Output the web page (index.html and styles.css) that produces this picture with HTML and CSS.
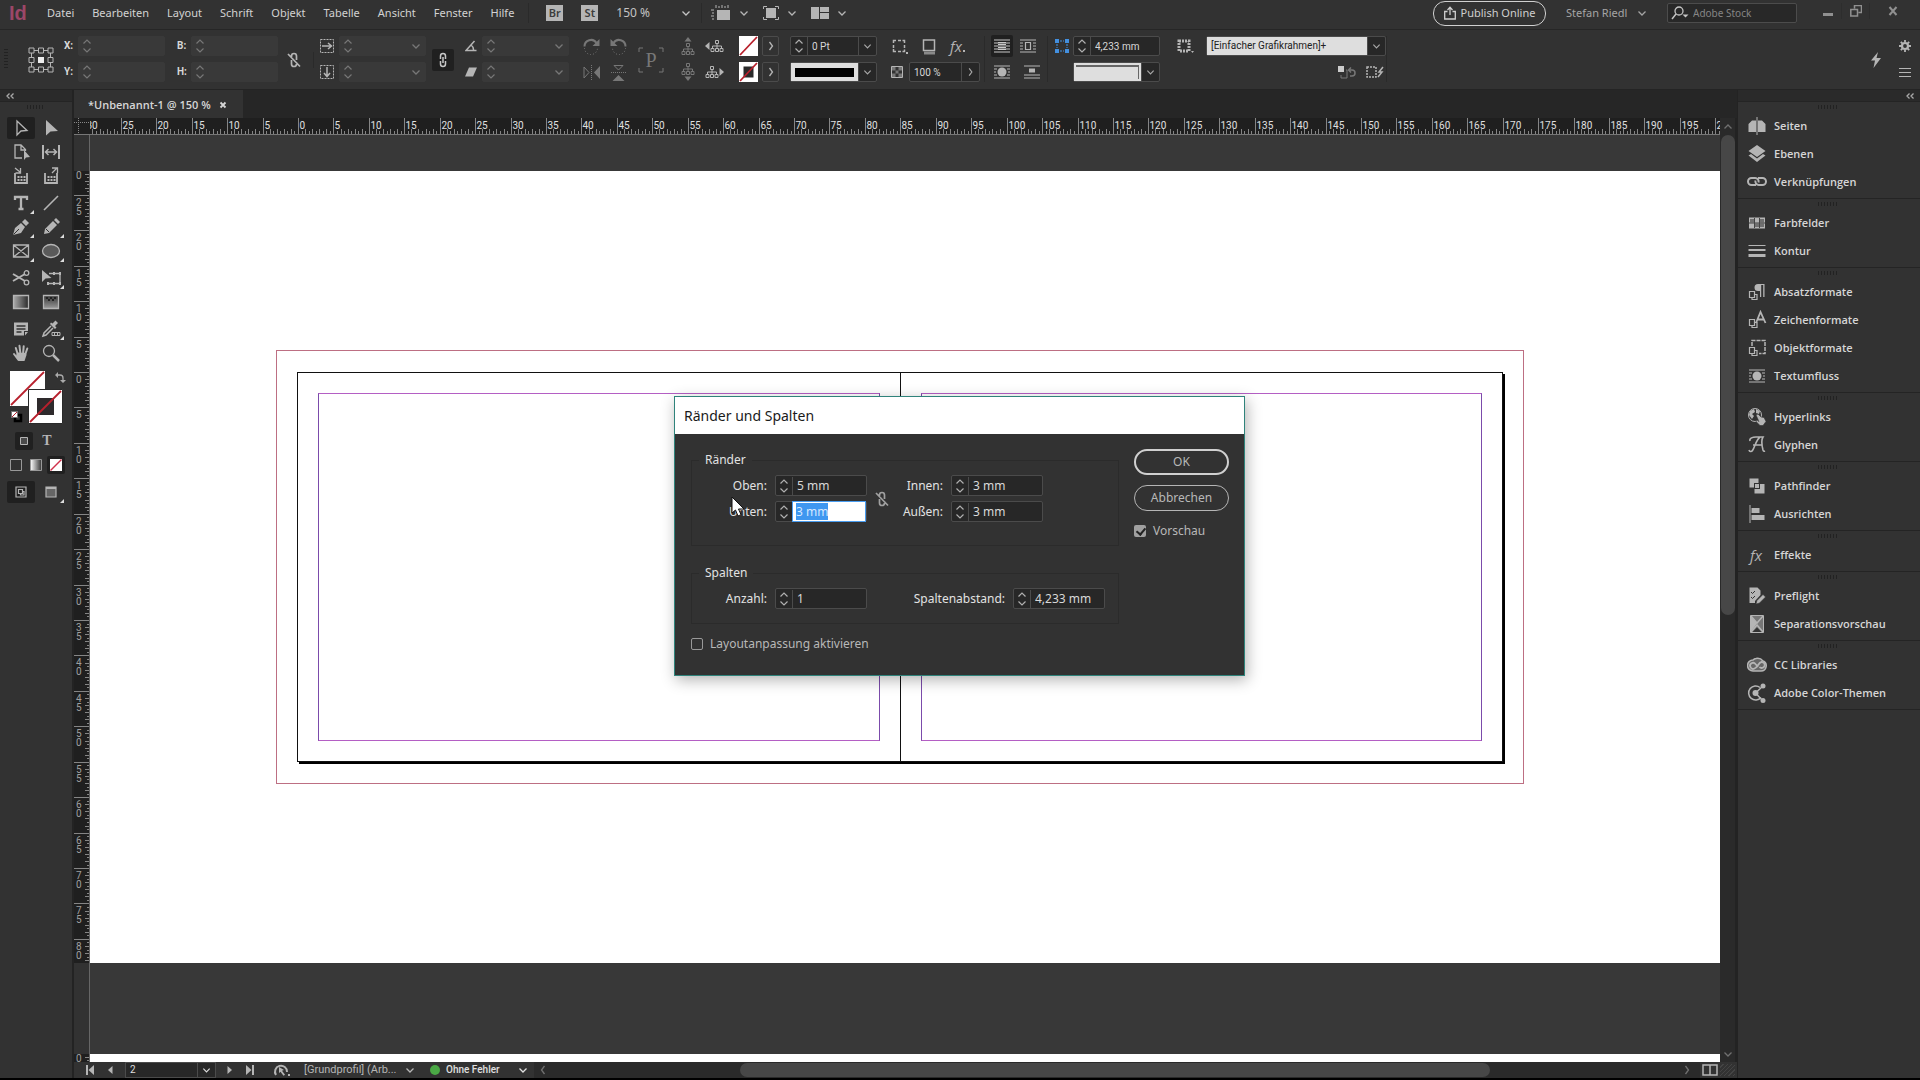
FILE: index.html
```html
<!DOCTYPE html>
<html lang="de">
<head>
    <meta charset="UTF-8">
    <meta name="viewport" content="width=device-width, initial-scale=1.0">
    <title>Unbenannt-1</title>
    <link rel="stylesheet" href="styles.css">
</head>
<body>

    <!-- Shared icons -->
    <svg class="sprite" aria-hidden="true">
        <symbol id="i-down" viewBox="0 0 10 10"><path d="M1.500 3.500 5 7l3.500-3.500" fill="none" stroke="currentColor" stroke-width="1.300"/></symbol>
        <symbol id="i-right" viewBox="0 0 10 10"><path d="M3.500 1 6.500 5l-3 4" fill="none" stroke="currentColor" stroke-width="1.300"/></symbol>
        <symbol id="i-steps" viewBox="0 0 10 18"><path d="M1.500 6.500 5 3l3.500 3.500M1.500 11.500 5 15l3.500-3.500" fill="none" stroke="currentColor" stroke-width="1.200"/></symbol>
        <symbol id="i-unlink" viewBox="0 0 14 16"><path d="M4.500 6V4a2.500 2.500 0 0 1 5 0v4M9.500 10v2a2.500 2.500 0 0 1-5 0V8M1 2l12 12.500" fill="none" stroke="currentColor" stroke-width="1.700"/></symbol>
        <symbol id="i-link" viewBox="0 0 10 16"><path d="M2.500 7V4a2.500 2.500 0 0 1 5 0v3M2.500 9v3a2.500 2.500 0 0 0 5 0V9M5 5v6" fill="none" stroke="currentColor" stroke-width="1.500"/></symbol>
        <symbol id="i-collapse" viewBox="0 0 10 8"><path d="M4.500 1.500 2 4l2.500 2.500M8.500 1.500 6 4l2.500 2.500" fill="none" stroke="currentColor" stroke-width="1.300"/></symbol>
        <symbol id="i-styles" viewBox="0 0 20 20"><path d="M2.500 9.500h5v6h-5zM5 15.500v2h5v-5H7.500" fill="none" stroke="currentColor" stroke-width="1.200"/></symbol>
        <symbol id="i-wrap" viewBox="0 0 18 14"><path d="M1 1h16M1 4h3M14 4h3M1 7h2M15 7h2M1 10h3M14 10h3M1 13h16" stroke="currentColor" stroke-width="1.200"/><circle cx="9" cy="7" r="4.500" fill="currentColor"/></symbol>
        <symbol id="i-tree" viewBox="0 0 14 12"><path d="M7 3v3M2.500 8.500V6h9v2.500M7 6v2.500M5.500.5h3v3h-3zM1 8.500h3v3H1zM5.500 8.500h3v3h-3zM10 8.500h3v3h-3z" fill="none" stroke="currentColor"/></symbol>
    </svg>

    <!-- Menu bar -->
    <header class="menubar">
        <span class="logo">Id</span>
        <nav class="menu">
            <a href="#">Datei</a>
            <a href="#">Bearbeiten</a>
            <a href="#">Layout</a>
            <a href="#">Schrift</a>
            <a href="#">Objekt</a>
            <a href="#">Tabelle</a>
            <a href="#">Ansicht</a>
            <a href="#">Fenster</a>
            <a href="#">Hilfe</a>
        </nav>
        <div class="quick">
            <button class="app-badge">Br</button>
            <button class="app-badge">St</button>
            <label class="picker zoom"><select aria-label="Zoomstufe"><option>150 %</option></select><svg class="chev"><use href="#i-down"/></svg></label>
        </div>
        <div class="view-modes">
            <button aria-label="Anzeigeoptionen"><svg width="20" height="16" viewBox="0 0 20 16"><path d="M6 5h13v10H6z" fill="currentColor"/><path d="M5 3V0M8 3V1M11 3V0M14 3V1M17 3V0M3 5H0M3 8H1M3 11H0M3 14H1" stroke="currentColor"/></svg><svg class="chev"><use href="#i-down"/></svg></button>
            <button aria-label="Bildschirmmodus"><svg width="16" height="16" viewBox="0 0 16 16"><path d="M3 3h10v10H3z" fill="currentColor"/><path d="M.5 4V1.500H4M12 1.500h3.500V4M15.500 12v2.500H12M4 14.500H.5V12" fill="none" stroke="currentColor"/></svg><svg class="chev"><use href="#i-down"/></svg></button>
            <button aria-label="Dokumente anordnen"><svg width="18" height="12" viewBox="0 0 18 12"><path d="M0 0h8v12H0zM9 0h9v5H9zM9 6h9v6H9z" fill="currentColor"/></svg><svg class="chev"><use href="#i-down"/></svg></button>
        </div>
        <div class="account">
            <button class="publish"><svg width="12" height="14" viewBox="0 0 12 14"><path d="M3.500 5.500H.7v7.500h10.600V5.500H8.500M6 9V1.500M3.500 4 6 1.300 8.500 4" fill="none" stroke="currentColor" stroke-width="1.300"/></svg>Publish Online</button>
            <label class="picker user"><select aria-label="Benutzer"><option>Stefan Riedl</option></select><svg class="chev"><use href="#i-down"/></svg></label>
            <label class="search"><svg width="18" height="14" viewBox="0 0 18 14"><circle cx="8" cy="5" r="4" fill="none" stroke="currentColor" stroke-width="1.300"/><path d="M5 8 1 13" stroke="currentColor" stroke-width="1.500"/><path d="M11.500 8.500h6l-3 3z" fill="currentColor"/></svg><input type="text" placeholder="Adobe Stock" aria-label="Adobe Stock"></label>
            <div class="window-buttons">
                <button aria-label="Minimieren"><svg width="12" height="12" viewBox="0 0 12 12"><path d="M1 8h10v3H1z" fill="currentColor"/></svg></button>
                <button aria-label="Verkleinern"><svg width="12" height="12" viewBox="0 0 12 12"><path d="M4.500 3.500v-3h7v7h-3M.8 4.500h6.700v6.500H.8z" fill="none" stroke="currentColor" stroke-width="1.500"/></svg></button>
                <button class="wide" aria-label="Schließen"><svg width="12" height="12" viewBox="0 0 12 12"><path d="M2.500 2l7 8M9.500 2l-7 8" stroke="currentColor" stroke-width="2"/></svg></button>
            </div>
        </div>
    </header>

    <!-- Control bar -->
    <section class="controlbar" aria-label="Steuerung">
        <span class="grip-v"></span>
        <svg class="middle" width="26" height="26" viewBox="0 0 26 26"><path d="M1 1h5v5H1zM10.500 1h5v5h-5zM20 1h5v5h-5zM1 10.500h5v5H1zM20 10.500h5v5h-5zM1 20h5v5H1zM10.500 20h5v5h-5zM20 20h5v5h-5zM6 3.500h4.500M15.500 3.500H20M6 22.500h4.500M15.500 22.500H20M3.500 6v4.500M3.500 15.500V20M22.500 6v4.500M22.500 15.500V20" fill="none" stroke="currentColor"/><path d="M10 10h6v6h-6z" fill="#eee"/></svg>
        <div class="pair">
            <div class="row"><label class="tag" for="pos-x">X:</label><div class="field off"><svg class="steps"><use href="#i-steps"/></svg><input id="pos-x" type="text"></div></div>
            <div class="row"><label class="tag" for="pos-y">Y:</label><div class="field off"><svg class="steps"><use href="#i-steps"/></svg><input id="pos-y" type="text"></div></div>
        </div>
        <div class="pair">
            <div class="row"><label class="tag" for="size-w">B:</label><div class="field off"><svg class="steps"><use href="#i-steps"/></svg><input id="size-w" type="text"></div></div>
            <div class="row"><label class="tag" for="size-h">H:</label><div class="field off"><svg class="steps"><use href="#i-steps"/></svg><input id="size-h" type="text"></div></div>
        </div>
        <div class="middle divided"><svg width="16" height="16"><use href="#i-unlink"/></svg></div>
        <div class="pair">
            <div class="row"><svg width="14" height="14" viewBox="0 0 14 14"><path d="M.5.5h13v13H.5z" fill="none" stroke="currentColor" stroke-dasharray="2 1"/><path d="M2 7h9M8 4l3.500 3L8 10" fill="none" stroke="currentColor" stroke-width="1.500"/></svg><div class="field off"><svg class="steps"><use href="#i-steps"/></svg><input type="text" aria-label="X-Skalierung"><svg class="chev"><use href="#i-down"/></svg></div></div>
            <div class="row"><svg width="14" height="14" viewBox="0 0 14 14"><path d="M.5.5h13v13H.5z" fill="none" stroke="currentColor" stroke-dasharray="2 1"/><path d="M7 2v9M4 8l3 3.500L10 8" fill="none" stroke="currentColor" stroke-width="1.500"/></svg><div class="field off"><svg class="steps"><use href="#i-steps"/></svg><input type="text" aria-label="Y-Skalierung"><svg class="chev"><use href="#i-down"/></svg></div></div>
        </div>
        <button class="pressed middle" aria-label="Proportionen"><svg width="10" height="16"><use href="#i-link"/></svg></button>
        <div class="pair">
            <div class="row"><svg width="12" height="12" viewBox="0 0 12 12"><path d="M9.500 1 1 10.500h10.500M6 5a6 6 0 0 1 2.500 5.500" fill="none" stroke="currentColor" stroke-width="1.500"/></svg><div class="field off"><svg class="steps"><use href="#i-steps"/></svg><input type="text" aria-label="Drehwinkel"><svg class="chev"><use href="#i-down"/></svg></div></div>
            <div class="row"><svg width="12" height="12" viewBox="0 0 12 12"><path d="M4 1.500h8L8 10.500H0z" fill="currentColor"/></svg><div class="field off"><svg class="steps"><use href="#i-steps"/></svg><input type="text" aria-label="Scherwinkel"><svg class="chev"><use href="#i-down"/></svg></div></div>
        </div>
        <div class="pair dim">
            <div class="row wide-gap">
                <svg width="17" height="17" viewBox="0 0 17 17"><path d="M1.500 8.500a6.500 6.500 0 0 1 12-3.500" fill="none" stroke="currentColor" stroke-width="2"/><path d="M16.500 1v7h-7z" fill="currentColor"/><path d="M1.500 10a6.500 6.500 0 0 0 13 0" fill="none" stroke="currentColor" stroke-dasharray="1 2"/></svg>
                <svg width="17" height="17" viewBox="0 0 17 17"><path d="M15.500 8.500a6.500 6.500 0 0 0-12-3.500" fill="none" stroke="currentColor" stroke-width="2"/><path d="M.5 1v7h7z" fill="currentColor"/><path d="M15.500 10a6.500 6.500 0 0 1-13 0" fill="none" stroke="currentColor" stroke-dasharray="1 2"/></svg>
            </div>
            <div class="row wide-gap">
                <svg width="17" height="17" viewBox="0 0 17 17"><path d="M1 3v11l5-5.500z" fill="none" stroke="currentColor"/><path d="M8.500 1v15" stroke="currentColor" stroke-dasharray="1 1"/><path d="M17 2v13l-6-6.500z" fill="currentColor"/></svg>
                <svg width="17" height="17" viewBox="0 0 17 17"><path d="M4 1.500h9L8.500 6z" fill="none" stroke="currentColor"/><path d="M1 8.500h15" stroke="currentColor" stroke-dasharray="1 1"/><path d="M2.500 17h12l-6-6z" fill="currentColor"/></svg>
            </div>
        </div>
        <svg class="middle dim" width="26" height="26" viewBox="0 0 26 26"><path d="M1 5V1h4M21 1h4v4M25 21v4h-4M5 25H1v-4" fill="none" stroke="currentColor"/><text x="13" y="20" text-anchor="middle" class="p-text" fill="currentColor">P</text></svg>
        <div class="pair">
            <div class="row wide-gap">
                <svg class="dim" width="14" height="18" viewBox="0 0 14 18"><path d="M3.500 4.500 7 0l3.500 4.500z" fill="currentColor"/><use href="#i-tree" y="6" width="14" height="12"/></svg>
                <svg width="19" height="12" viewBox="0 0 19 12"><path d="M4.500 2v8L0 6z" fill="currentColor"/><use href="#i-tree" x="5" width="14" height="12"/></svg>
            </div>
            <div class="row wide-gap">
                <svg class="dim" width="14" height="18" viewBox="0 0 14 18"><use href="#i-tree" width="14" height="12"/><path d="M3.500 13.500 7 18l3.500-4.500z" fill="currentColor"/></svg>
                <svg width="19" height="12" viewBox="0 0 19 12"><use href="#i-tree" width="14" height="12"/><path d="M14.500 2v8L19 6z" fill="currentColor"/></svg>
            </div>
        </div>
        <div class="pair">
            <div class="row tight"><svg width="19" height="20" viewBox="0 0 19 20"><path d="M0 0h19v20H0z" fill="#fff"/><path d="M1 19 18 1" stroke="#b8202c" stroke-width="1.800"/></svg><button class="boxed" aria-label="Flächenfarbe"><svg class="chev"><use href="#i-right"/></svg></button></div>
            <div class="row tight"><svg width="19" height="20" viewBox="0 0 19 20"><path d="M0 0h19v20H0z" fill="#fff"/><path d="M4.500 4.500h10v11h-10z" fill="#2a2a2a"/><path d="M1 19 18 1" stroke="#b8202c" stroke-width="1.800"/></svg><button class="boxed" aria-label="Konturfarbe"><svg class="chev"><use href="#i-right"/></svg></button></div>
        </div>
        <div class="pair">
            <div class="field"><svg class="steps"><use href="#i-steps"/></svg><input type="text" value="0 Pt" aria-label="Konturstärke"><svg class="chev cap"><use href="#i-down"/></svg></div>
            <button class="field preview" aria-label="Konturart"><span class="stroke-line"></span><svg class="chev cap"><use href="#i-down"/></svg></button>
        </div>
        <div class="pair divided">
            <div class="row effects">
                <svg width="17" height="17" viewBox="0 0 17 17"><path d="M2.500 5V2.500H5M7 2.500h3M11.500 2.500h2V5M13.500 7v3M13.500 11.500v2h-2M10 13.500H7M5 13.500H2.500V11M2.500 10V7" fill="none" stroke="currentColor" stroke-width="1.500"/><path d="M15 14h2v2h-2z" fill="currentColor"/></svg>
                <svg width="16" height="17" viewBox="0 0 16 17"><path d="M2.500 2h11v10.500h-11z" fill="none" stroke="currentColor" stroke-width="1.500"/><path d="M3 15h11" stroke="#8a8a8a" stroke-width="3"/></svg>
                <span class="fx">fx<i></i></span>
            </div>
            <div class="row">
                <svg width="12" height="12" viewBox="0 0 12 12"><path d="M.5.5h11v11H.5z" fill="none" stroke="currentColor"/><path d="M1 1h3.500v3.500H1zM7.500 1H11v3.500H7.500zM4.500 4.500h3v3h-3zM1 7.500h3.500V11H1zM7.500 7.500H11V11H7.500z" fill="#777"/></svg>
                <div class="field opacity"><input type="text" value="100 %" aria-label="Deckkraft"><svg class="chev cap"><use href="#i-right"/></svg></div>
            </div>
        </div>
        <div class="pair divided">
            <div class="row tight">
                <button class="pressed" aria-label="Kein Textumfluss"><svg width="18" height="14" viewBox="0 0 18 14"><path d="M1 1h16M1 4h16M1 7h16M1 10h16M1 13h16" stroke="currentColor" stroke-width="1.200"/><path d="M5 3.500h8M5 5.500h8M5 8.500h8M5 10.500h8" stroke="currentColor"/></svg></button>
                <button class="plain" aria-label="Umfließen der Bounding Box"><svg width="18" height="14" viewBox="0 0 18 14"><path d="M1 1h16M1 4h3M14 4h3M1 7h3M14 7h3M1 10h3M14 10h3M1 13h16M6.500 3.500h5v7h-5z" fill="none" stroke="currentColor" stroke-width="1.200"/></svg></button>
            </div>
            <div class="row tight">
                <button class="plain" aria-label="Konturenführung"><svg width="18" height="14"><use href="#i-wrap"/></svg></button>
                <button class="plain" aria-label="Objekt überspringen"><svg width="18" height="14" viewBox="0 0 18 14"><path d="M1 1h16M1 10h16M1 13h16" stroke="currentColor" stroke-width="1.200"/><path d="M6 3.500h6v4H6z" fill="currentColor"/></svg></button>
            </div>
        </div>
        <div class="pair corner">
            <div class="row"><svg width="16" height="16" viewBox="0 0 16 16"><path d="M1 1h4v4H1zM11 1h4v4h-4zM1 11h4v4H1zM11 11h4v4h-4z" fill="#4390e0"/><path d="M6 3h4M6 13h4M3 6v4M13 6v4" stroke="#4390e0" stroke-dasharray="2 1"/></svg><div class="field"><svg class="steps"><use href="#i-steps"/></svg><input type="text" value="4,233 mm" aria-label="Eckengröße"></div></div>
            <button class="field preview" aria-label="Eckenform"><span class="corner-line"></span><svg class="chev cap"><use href="#i-down"/></svg></button>
        </div>
        <div class="pair divided">
            <div class="row object-style"><svg width="18" height="16" viewBox="0 0 18 16"><path d="M3 3h10v10H3z" fill="none" stroke="currentColor" stroke-width="3" stroke-dasharray="2 1"/><path d="M15 13h3l-1.500 2z" fill="currentColor"/></svg><label class="field"><select aria-label="Objektformat"><option>[Einfacher Grafikrahmen]+</option></select><svg class="chev cap"><use href="#i-down"/></svg></label></div>
            <div class="row at-end">
                <svg width="20" height="14" viewBox="0 0 20 14"><path d="M1 1h6v6H1z" fill="#ccc"/><path d="M4 10v3h6V5H9" fill="none" stroke="#777"/><path d="M12 5h3a3 3 0 0 1 0 6h-2M14 2.500 11.500 5 14 7.500" fill="none" stroke="#777" stroke-width="1.500"/></svg>
                <svg width="18" height="14" viewBox="0 0 18 14"><path d="M1 2h9v10H1z" fill="none" stroke="currentColor" stroke-width="1.500" stroke-dasharray="2 1"/><path d="M17 2l-4 5h3l-4 5" fill="none" stroke="currentColor" stroke-width="1.500"/></svg>
            </div>
        </div>
        <span></span>
        <button class="plain middle" aria-label="Schnellanwendung"><svg width="12" height="18" viewBox="0 0 12 18"><path d="M8 1 1 9.500h4L3.500 17 11 7H6.500z" fill="currentColor"/></svg></button>
        <div class="pair">
            <button class="plain" aria-label="Anpassen"><svg width="12" height="12" viewBox="0 0 12 12"><circle cx="6" cy="6" r="3" fill="none" stroke="currentColor" stroke-width="2.200"/><path d="M6 0v2M6 10v2M0 6h2M10 6h2M1.800 1.800l1.500 1.500M8.700 8.700l1.500 1.500M1.800 10.200l1.500-1.500M8.700 3.300l1.500-1.500" stroke="currentColor" stroke-width="1.800"/></svg></button>
            <button class="plain" aria-label="Bedienfeldmenü"><svg width="12" height="10" viewBox="0 0 12 10"><path d="M0 1.500h12M0 5.500h12M0 9.500h12" stroke="currentColor"/></svg></button>
        </div>
    </section>

    <main class="workspace">

        <!-- Tools -->
        <aside class="tools" aria-label="Werkzeuge">
            <div class="panel-head"><svg width="10" height="8"><use href="#i-collapse"/></svg></div>
            <div class="grip"></div>
            <div class="tool-group">
                <button class="tool active" aria-label="Auswahl"><svg viewBox="0 0 20 20"><path d="M6 3v14l4-4 6-.5z" fill="none" stroke="currentColor" stroke-width="1.300"/></svg></button>
                <button class="tool" aria-label="Direktauswahl"><svg viewBox="0 0 20 20"><path d="M5 2v15.500l4.500-4L17 13z" fill="currentColor"/></svg></button>
                <button class="tool" aria-label="Seite"><svg viewBox="0 0 20 20"><path d="M11 16H4V3h6l4.500 4.500V9M10 3v5h4" fill="none" stroke="currentColor" stroke-width="1.300"/><path d="M13 8v10l2-2.500 4-.5z" fill="currentColor"/></svg></button>
                <button class="tool" aria-label="Lücke"><svg viewBox="0 0 20 20"><path d="M2 3v14M18 3v14" stroke="currentColor" stroke-width="2"/><path d="M5 10h10M7.500 7 4.500 10l3 3M12.500 7l3 3-3 3" fill="none" stroke="currentColor" stroke-width="1.500"/></svg></button>
                <button class="tool" aria-label="Inhaltsaufnahme"><svg viewBox="0 0 20 20"><path d="M4 7v10h12V7" fill="none" stroke="currentColor" stroke-width="1.800"/><path d="M6.500 11h2M9.500 11h2M12.500 11h2M6.500 14h2M9.500 14h2M12.500 14h2" stroke="currentColor" stroke-width="2"/><path d="M4 2l5 4M9.500 2v5h-5" fill="none" stroke="currentColor" stroke-width="1.300"/></svg></button>
                <button class="tool" aria-label="Inhaltsplatzierung"><svg viewBox="0 0 20 20"><path d="M4 7v10h12V7" fill="none" stroke="currentColor" stroke-width="1.800"/><path d="M6.500 11h2M9.500 11h2M12.500 11h2M6.500 14h2M9.500 14h2M12.500 14h2" stroke="currentColor" stroke-width="2"/><path d="M11 7l5-5M11 2h5.500v5" fill="none" stroke="currentColor" stroke-width="1.300"/></svg></button>
            </div>
            <div class="tool-group">
                <button class="tool more" aria-label="Text"><svg viewBox="0 0 20 20"><path d="M4 7V4h12v3M10 4v12M7.500 16h5" fill="none" stroke="currentColor" stroke-width="2.300"/></svg></button>
                <button class="tool" aria-label="Linienzeichner"><svg viewBox="0 0 20 20"><path d="M3 17 17 3" stroke="currentColor" stroke-width="1.600"/></svg></button>
                <button class="tool more" aria-label="Zeichenstift"><svg viewBox="0 0 20 20"><path d="M2 18 4 11l6-5 4 4-4 6z" fill="currentColor"/><path d="M11 5l3-3 4 4-3 3z" fill="currentColor"/><path d="M2.500 17.500 8 12" stroke="#323232"/></svg></button>
                <button class="tool more" aria-label="Buntstift"><svg viewBox="0 0 20 20"><path d="M3 17l1-5 8-8 4 4-8 8zM13 3l2-2 4 4-2 2z" fill="currentColor"/><path d="M5 12l3 3" stroke="#323232"/></svg></button>
                <button class="tool more" aria-label="Rechteckrahmen"><svg viewBox="0 0 20 20"><path d="M2.500 4h15v12h-15zM2.500 4l15 12M17.500 4l-15 12" fill="none" stroke="currentColor" stroke-width="1.300"/></svg></button>
                <button class="tool more" aria-label="Ellipse"><svg viewBox="0 0 20 20"><ellipse cx="10" cy="10" rx="8.500" ry="6.500" fill="#5a5a5a" stroke="currentColor" stroke-width="1.300"/></svg></button>
            </div>
            <div class="tool-group">
                <button class="tool" aria-label="Schere"><svg viewBox="0 0 20 20"><path d="M2 6l12 7M2 13l12-7" stroke="currentColor" stroke-width="2"/><circle cx="15.500" cy="5" r="2.300" fill="none" stroke="currentColor" stroke-width="1.300"/><circle cx="15.500" cy="14.500" r="2.300" fill="none" stroke="currentColor" stroke-width="1.300"/></svg></button>
                <button class="tool more" aria-label="Frei transformieren"><svg viewBox="0 0 20 20"><path d="M8 5.500h11v10H7" fill="none" stroke="currentColor" stroke-width="1.300" /><path d="M18 4h2v3h-2zM18 14h2v3h-2zM12 4h2v3h-2zM12 14h2v3h-2zM6 14h2v3H6z" fill="currentColor"/><path d="M1 2v12l3.500-3.500 6-.5z" fill="currentColor"/></svg></button>
                <button class="tool" aria-label="Verlaufsfarbfeld"><svg viewBox="0 0 20 20"><defs><linearGradient id="grad-h"><stop offset="0" stop-color="#aaa"/><stop offset="1" stop-color="#2a2a2a"/></linearGradient></defs><path d="M2.500 3.500h15v13h-15z" fill="url(#grad-h)" stroke="currentColor" stroke-width="1.300"/></svg></button>
                <button class="tool" aria-label="Weiche Verlaufskante"><svg viewBox="0 0 20 20"><defs><linearGradient id="grad-v" x2="0" y2="1"><stop offset="0" stop-color="#333"/><stop offset="1" stop-color="#999"/></linearGradient></defs><path d="M2.500 3.500h15v13h-15z" fill="url(#grad-v)" stroke="currentColor" stroke-width="1.300"/><path d="M5 5h2v2H5zM9 5h2v2H9zM13 5h2v2h-2zM7 7h2v2H7zM11 7h2v2h-2z" fill="#222"/></svg></button>
            </div>
            <div class="tool-group">
                <button class="tool" aria-label="Notiz"><svg viewBox="0 0 20 20"><path d="M3 3.500h14V12h-4v4.500H3zM14 13h3l-3 3.500z" fill="currentColor"/><path d="M5.500 7h9M5.500 10h9M5.500 13h5" stroke="#323232" stroke-width="1.300"/></svg></button>
                <button class="tool more" aria-label="Pipette"><svg viewBox="0 0 20 20"><path d="M10 7 3 14l-1 3 3-1 7-7" fill="none" stroke="currentColor" stroke-width="1.500"/><path d="M9 5l5 5 1.500-1.500L14 7l3-3-2.500-2.500-3 3L10 3.500z" fill="currentColor"/><path d="M11 13.500h8v3h-8zM13.500 13v3M16.500 13v3" fill="none" stroke="currentColor"/></svg></button>
                <button class="tool" aria-label="Hand"><svg viewBox="0 0 20 20"><path d="M7.500 17 3 11M7 12 4.800 5M9.500 11.500 8.500 2.800M12 11.500l.7-8.200M14 12l2.300-6.500" fill="none" stroke="currentColor" stroke-width="2" stroke-linecap="round"/><path d="M6 9.500l9 .5.500 2-2 6H8l-3-5z" fill="currentColor"/></svg></button>
                <button class="tool" aria-label="Zoom"><svg viewBox="0 0 20 20"><circle cx="8" cy="8" r="5.500" fill="none" stroke="currentColor" stroke-width="1.300"/><path d="M12 12l6 6" stroke="currentColor" stroke-width="2.500"/></svg></button>
            </div>
            <svg class="color-proxy" width="60" height="56" viewBox="0 0 60 56" aria-label="Fläche und Kontur">
                <path d="M4 2h35v35H4z" fill="#fff"/><path d="M5 36 38 3" stroke="#b8202c" stroke-width="1.800"/>
                <path d="M22.500 20.500h34v34h-34z" fill="#fff" stroke="#2a2a2a"/><path d="M31 29h17v17H31z" fill="#2e2a2c"/><path d="M24 53 55 22" stroke="#b8202c" stroke-width="1.800"/>
                <path d="M51 6h3a3 3 0 0 1 3 3v4" fill="none" stroke="#aaa" stroke-width="1.300"/><path d="M49 6l3-3v6zM54 11h6l-3 3z" fill="#aaa"/>
                <path d="M9 46h6v6H9z" fill="none" stroke="#000" stroke-width="2.500"/><path d="M5.500 42.500h6v6h-6z" fill="#fff" stroke="#777"/><path d="M6 48l5-5" stroke="#b8202c"/>
            </svg>
            <div class="formatting">
                <button class="mini active" aria-label="Formatierung wirkt sich auf Container aus"><svg viewBox="0 0 16 16"><path d="M4.500 4.500h7v7h-7z" fill="#4a4a4a" stroke="currentColor"/></svg></button>
                <button class="mini serif">T</button>
            </div>
            <div class="apply">
                <button class="mini" aria-label="Farbe anwenden"><svg viewBox="0 0 16 16"><path d="M2.500 2.500h11v11h-11z" fill="none" stroke="#999"/></svg></button>
                <button class="mini" aria-label="Verlauf anwenden"><svg viewBox="0 0 16 16"><defs><linearGradient id="grad-w"><stop offset="0" stop-color="#fff"/><stop offset="1" stop-color="#333"/></linearGradient></defs><path d="M2.500 2.500h11v11h-11z" fill="url(#grad-w)" stroke="#999"/></svg></button>
                <button class="mini active" aria-label="Keine anwenden"><svg viewBox="0 0 16 16"><path d="M2 2h12v12H2z" fill="#fff"/><path d="M2.500 13.500l11-11" stroke="#d0304a" stroke-width="1.500"/></svg></button>
            </div>
            <div class="tool-group">
                <button class="tool active" aria-label="Normal"><svg viewBox="0 0 20 20"><path d="M5 5h10v10H5zM7.500 7.500h4v4h-4zM9.500 11.500v1.500h3.500V9.500h-1.500" fill="none" stroke="currentColor" stroke-width="1.200"/></svg></button>
                <button class="tool more" aria-label="Vorschau"><svg viewBox="0 0 20 20"><path d="M5 5h10v10H5z" fill="#666" stroke="currentColor" stroke-width="1.200"/><path d="M5 6h10" stroke="currentColor" stroke-width="2"/></svg></button>
            </div>
        </aside>

        <!-- Document window -->
        <section class="document">
            <div class="tabs">
                <div class="tab"><a href="#">*Unbenannt-1 @ 150 %</a><button aria-label="Tab schließen"><svg width="8" height="8" viewBox="0 0 8 8"><path d="M1.500 1.500l5 5M6.500 1.500l-5 5" stroke="currentColor" stroke-width="1.800"/></svg></button></div>
            </div>
            <div class="view">
                <svg class="ruler-corner" viewBox="0 0 16 16"><path d="M0 4.500h16M4.500 0v16" stroke="#888" stroke-dasharray="1 1"/></svg>
                <svg class="ruler-h" id="ruler-h"></svg>
                <div class="scroll-up"><svg class="chev flip"><use href="#i-down"/></svg></div>
                <div class="ruler-v">
                    <svg class="ruler-strip" id="ruler-v"></svg>
                    <svg class="ruler-strip next" id="ruler-v-next"></svg>
                </div>
                <div class="canvas">
                    <div class="pasteboard"></div>
                    <div class="pasteboard following"></div>
                    <div class="bleed"></div>
                    <div class="spread">
                        <div class="page"><div class="margins"></div></div>
                        <div class="page"><div class="margins"></div></div>
                    </div>
                </div>
                <div class="scroll-v"><span class="thumb"></span><svg class="chev"><use href="#i-down"/></svg></div>
            </div>
            <footer class="statusbar">
                <button aria-label="Erste Seite"><svg width="10" height="10" viewBox="0 0 10 10"><path d="M1 0h2v10H1zM9 0v10L3.500 5z" fill="currentColor"/></svg></button>
                <button aria-label="Vorherige Seite"><svg width="10" height="10" viewBox="0 0 10 10"><path d="M7.500 1v8L3 5z" fill="currentColor"/></svg></button>
                <div class="page-number"><input type="text" value="2" aria-label="Seite"><svg class="chev cap"><use href="#i-down"/></svg></div>
                <button aria-label="Nächste Seite"><svg width="10" height="10" viewBox="0 0 10 10"><path d="M2.500 1v8L7 5z" fill="currentColor"/></svg></button>
                <button aria-label="Letzte Seite"><svg width="10" height="10" viewBox="0 0 10 10"><path d="M7 0h2v10H7zM1 0v10l5.500-5z" fill="currentColor"/></svg></button>
                <svg class="open-doc" width="18" height="14" viewBox="0 0 18 14"><path d="M3 12a6 6 0 1 1 11-3" fill="none" stroke="currentColor" stroke-width="2"/><path d="M6 4l5 3-2 .8 3 4-1.500 1-3-4L6 10z" fill="currentColor"/><path d="M15 11h2v2h-2z" fill="currentColor"/></svg>
                <label class="picker profile"><select aria-label="Preflight-Profil"><option>[Grundprofil] (Arb...</option></select><svg class="chev"><use href="#i-down"/></svg></label>
                <label class="picker errors"><span class="dot"></span><select aria-label="Preflight-Status"><option>Ohne Fehler</option></select><svg class="chev"><use href="#i-down"/></svg></label>
                <div class="scroll-h"><svg class="chev left"><use href="#i-right"/></svg><span class="thumb"></span><svg class="chev"><use href="#i-right"/></svg></div>
                <button aria-label="Layoutansicht teilen"><svg width="16" height="12" viewBox="0 0 16 12"><path d="M1 1h14v10H1zM8 1v10" fill="none" stroke="currentColor" stroke-width="1.500"/></svg></button>
                <span class="resize"></span>
            </footer>
        </section>

        <!-- Panel dock -->
        <aside class="dock" aria-label="Bedienfelder">
            <div class="panel-head end"><svg width="10" height="8"><use href="#i-collapse"/></svg></div>
            <div class="panel-group">
                <a href="#"><svg viewBox="0 0 20 20"><path d="M1.500 8 5 4.500h4V16H1.500zM11 4.500h4L18.500 8v8H11z" fill="currentColor"/><path d="M10 1v18" stroke="currentColor"/></svg>Seiten</a>
                <a href="#"><svg viewBox="0 0 20 20"><path d="M10 1l8.500 6L10 13 1.500 7zM1.500 11.500 4 10l6 4.500L16 10l2.500 1.500L10 18z" fill="currentColor"/></svg>Ebenen</a>
                <a href="#"><svg viewBox="0 0 20 20"><path d="M9 13H4.500a3.500 3.500 0 0 1 0-7H8a3.500 3.500 0 0 1 3.500 4.500M11 6h4.500a3.500 3.500 0 0 1 0 7H12a3.500 3.500 0 0 1-3.500-4.500" fill="none" stroke="currentColor" stroke-width="2"/></svg>Verknüpfungen</a>
            </div>
            <div class="panel-group">
                <a href="#"><svg viewBox="0 0 20 20"><path d="M2 4.500h16v11H2z" fill="currentColor"/><path d="M3 6h4v3.500H3zM13 6h4v3.500h-4zM8 10.500h4V14H8zM13 10.500h4V14h-4z" fill="#707070"/><path d="M2 10h16M7.500 5v10M12.500 5v10" stroke="#444"/></svg>Farbfelder</a>
                <a href="#"><svg viewBox="0 0 20 20"><path d="M1.500 4.500h17" stroke="currentColor"/><path d="M1.500 9h17" stroke="currentColor" stroke-width="2"/><path d="M1.500 14.500h17" stroke="currentColor" stroke-width="3"/></svg>Kontur</a>
            </div>
            <div class="panel-group">
                <a href="#"><svg viewBox="0 0 20 20"><use href="#i-styles" width="20" height="20"/><path d="M17.500 15V2H11a3.500 3.500 0 0 0 0 7h2V15h1.200V3h2V15z" fill="currentColor"/></svg>Absatzformate</a>
                <a href="#"><svg viewBox="0 0 20 20"><use href="#i-styles" width="20" height="20"/><path d="M9 13l4.500-11L18.500 13M10.500 9.500h6.500" fill="none" stroke="currentColor" stroke-width="1.800"/></svg>Zeichenformate</a>
                <a href="#"><svg viewBox="0 0 20 20"><use href="#i-styles" width="20" height="20"/><path d="M5 8V2.500h13v13h-6" fill="none" stroke="currentColor" stroke-width="1.500" stroke-dasharray="4 1"/></svg>Objektformate</a>
                <a href="#"><svg viewBox="0 0 20 20"><use href="#i-wrap" x="1" y="3" width="18" height="14"/></svg>Textumfluss</a>
            </div>
            <div class="panel-group">
                <a href="#"><svg viewBox="0 0 20 20"><circle cx="8" cy="8" r="6.500" fill="none" stroke="currentColor"/><path d="M3 4l4-2 1 3-3 2 2 2-2 3-3-4zM9 2l4 2-1 3-3-1z" fill="currentColor"/><path d="M9 8l2-1 3 3 3 .5 2 4-3 4h-3l-4-4 1.500-1 1.500 1z" fill="currentColor" stroke="#323232" stroke-width=".6"/></svg>Hyperlinks</a>
                <a href="#"><svg viewBox="0 0 20 20"><path d="M3 6c-1-3 3-4 6-4h7c-2 3-1 9 0 13 .3 1 1 1.500 2 1M13 2C9 5 8 12 5.500 15.500 4.500 17 2.500 17 2 15M6 10h9" fill="none" stroke="currentColor" stroke-width="1.600"/></svg>Glyphen</a>
            </div>
            <div class="panel-group">
                <a href="#"><svg viewBox="0 0 20 20"><path d="M2.500 2.500h9V7H7v4.500H2.500zM13 8h4.500v9.500h-10V13H13z" fill="currentColor"/><path d="M8 8h4v4H8z" fill="currentColor"/></svg>Pathfinder</a>
                <a href="#"><svg viewBox="0 0 20 20"><path d="M3 1v18" stroke="currentColor"/><path d="M4.500 4h8v5h-8zM4.500 11h13v5h-13z" fill="currentColor"/></svg>Ausrichten</a>
            </div>
            <div class="panel-group">
                <a href="#"><span class="fx">fx</span>Effekte</a>
            </div>
            <div class="panel-group">
                <a href="#"><svg viewBox="0 0 20 20"><path d="M2.500 1.500h8l3 3V9L8 15v2H2.500z" fill="currentColor"/><path d="M4 6l1.500 1.500L8 5M4 11l1.500 1.500L8 10" fill="none" stroke="#323232"/><path d="M9 18l1-3.500 6-6 2.500 2.500-6 6z" fill="currentColor" stroke="#323232" stroke-width=".5"/></svg>Preflight</a>
                <a href="#"><svg viewBox="0 0 20 20"><path d="M3.500 1.500h13v17h-13z" fill="#777" stroke="currentColor"/><path d="M3.500 1.500 10 9.500 3.500 18z" fill="currentColor"/><path d="M4 18l6-7 6 7M4 2l6 7 6-7" fill="none" stroke="currentColor" stroke-width="1.500"/><path d="M5.500 18l4.500-4.500 4.500 4.500z" fill="#323232"/></svg>Separationsvorschau</a>
            </div>
            <div class="panel-group">
                <a href="#"><svg viewBox="0 0 20 20"><path d="M6 16a5.500 5.500 0 0 1 0-11 6 6 0 0 1 3-1.500 7 7 0 0 1 7 2.500 5.200 5.200 0 0 1-2 10z" fill="#666" stroke="currentColor" stroke-width="1.500"/><path d="M11 12l-2.500-3a3 3 0 1 0-1 4.500c3-1 4-6 7-6.500a3 3 0 1 1-2 5" fill="none" stroke="currentColor" stroke-width="1.800"/></svg>CC Libraries</a>
                <a href="#"><svg viewBox="0 0 20 20"><path d="M13 4.500a7 7 0 1 0 1 10" fill="none" stroke="currentColor" stroke-width="1.500"/><circle cx="8.500" cy="10" r="3" fill="currentColor"/><path d="M8.500 10 16 3M8.500 10l7.500 8" stroke="currentColor" stroke-width="1.500"/><circle cx="16" cy="3" r="2.500" fill="currentColor"/><circle cx="16" cy="17.500" r="2.500" fill="currentColor"/></svg>Adobe Color-Themen</a>
            </div>
        </aside>
    </main>

    <!-- Dialog -->
    <form class="dialog" role="dialog" aria-labelledby="dialog-title">
        <h1 id="dialog-title">Ränder und Spalten</h1>
        <div class="dialog-body">
            <div class="settings">
                <fieldset class="margin-fields">
                    <legend>Ränder</legend>
                    <label for="m-top">Oben:</label>
                    <div class="field"><svg class="steps"><use href="#i-steps"/></svg><input id="m-top" type="text" value="5 mm"></div>
                    <svg class="chain" width="14" height="16"><use href="#i-unlink"/></svg>
                    <label for="m-in">Innen:</label>
                    <div class="field"><svg class="steps"><use href="#i-steps"/></svg><input id="m-in" type="text" value="3 mm"></div>
                    <label for="m-bottom">Unten:</label>
                    <div class="field"><svg class="steps"><use href="#i-steps"/></svg><input id="m-bottom" type="text" value="3 mm"></div>
                    <label for="m-out">Außen:</label>
                    <div class="field"><svg class="steps"><use href="#i-steps"/></svg><input id="m-out" type="text" value="3 mm"></div>
                </fieldset>
                <fieldset class="column-fields">
                    <legend>Spalten</legend>
                    <label for="c-count">Anzahl:</label>
                    <div class="field"><svg class="steps"><use href="#i-steps"/></svg><input id="c-count" type="text" value="1"></div>
                    <label for="c-gap">Spaltenabstand:</label>
                    <div class="field"><svg class="steps"><use href="#i-steps"/></svg><input id="c-gap" type="text" value="4,233 mm"></div>
                </fieldset>
                <label class="check"><input type="checkbox">Layoutanpassung aktivieren</label>
            </div>
            <div class="actions">
                <button type="button" class="default">OK</button>
                <button type="button">Abbrechen</button>
                <label class="check"><input type="checkbox" checked>Vorschau</label>
            </div>
        </div>
        <svg class="pointer" width="14" height="22" viewBox="0 0 14 22"><path d="M1 1v16l3.500-3 2.500 6 3-1.300L7.500 13H13z" fill="#fff" stroke="#111"/></svg>
    </form>

    <script src="script.js"></script>
</body>
</html>
```
FILE: styles.css
```css
* {
    box-sizing: border-box;
}

body {
    margin: 0;
    height: 100vh;
    display: flex;
    flex-direction: column;
    overflow: hidden;
    background: #323232;
    border-bottom: 2px solid #000;
    color: #c4c4c4;
    font: 11px/16px 'Noto Sans', 'Open Sans', sans-serif;
}

button,
input,
select {
    appearance: none;
    margin: 0;
    padding: 0;
    border: 0;
    background: none;
    color: inherit;
    font: inherit;
    outline: none;
}

button {
    display: flex;
    align-items: center;
    justify-content: center;
}

input {
    min-width: 0;
}

a {
    color: inherit;
    text-decoration: none;
}

svg {
    display: block;
    flex: none;
}

.sprite {
    display: none;
}

.chev {
    width: 10px;
    height: 10px;
}

.flip {
    transform: rotate(180deg);
}

.steps {
    width: 10px;
    height: 18px;
}

.fx {
    width: 20px;
    color: #b5b5b5;
    font: italic 15px/20px 'Open Sans', sans-serif;
}

.fx i {
    display: inline-block;
    width: 2px;
    height: 2px;
    margin-left: 1px;
    background: #b5b5b5;
}

.p-text {
    font: 20px 'Liberation Serif', serif;
}

/* Menu bar */
.menubar {
    display: flex;
    align-items: center;
    flex: none;
    height: 29px;
    padding: 0 4px 3px 9px;
}

.logo {
    width: 38px;
    color: #9c4768;
    font: bold 20px/20px 'Liberation Sans', sans-serif;
}

.menu {
    display: flex;
    gap: 18px;
    color: #d2d2d2;
}

.quick,
.view-modes,
.account,
.window-buttons,
.picker {
    display: flex;
    align-items: center;
}

.quick {
    height: 20px;
    margin-left: 14px;
    padding: 0 10px 0 17px;
    border-left: 1px solid #2a2a2a;
    gap: 18px;
}

.app-badge {
    width: 17px;
    height: 16px;
    background: #b5b5b5;
    color: #3c3c3c;
    font-weight: 600;
}

.zoom {
    font-size: 12px;
}

.zoom select {
    width: 65px;
}

.view-modes {
    height: 20px;
    padding-left: 9px;
    border-left: 1px solid #2a2a2a;
    gap: 14px;
    color: #b5b5b5;
}

.view-modes button {
    gap: 8px;
}

.account {
    margin-left: auto;
}

.publish {
    gap: 5px;
    width: 113px;
    height: 25px;
    margin-right: 20px;
    border: 1px solid #d0d0d0;
    border-radius: 12px;
    color: #cfcfcf;
}

.user {
    margin-right: 20px;
    color: #a5a5a5;
}

.user select {
    width: 71px;
}

.search {
    display: flex;
    align-items: center;
    gap: 4px;
    width: 130px;
    height: 20px;
    margin-right: 17px;
    padding-left: 3px;
    border: 1px solid #4c4c4c;
    border-radius: 2px;
    background: #282828;
    font-size: 10px;
}

.search input {
    width: 80px;
}

.search input::placeholder {
    color: #858585;
}

.window-buttons {
    align-self: flex-start;
    height: 20px;
    color: #909090;
}

.window-buttons button {
    width: 28px;
    height: 16px;
    border-right: 1px solid #2d2d2d;
}

.window-buttons .wide {
    width: 46px;
    border: 0;
}

/* Control bar */
.controlbar {
    display: grid;
    grid-template-columns: 24px 36px 113px 109px 34px 112px 33px 118px 55px 43px 58px 51px 101px 100px 63px 122px 217px 1fr 29px 26px;
    align-items: start;
    flex: none;
    height: 61px;
    padding: 6px 0 0 4px;
    border-top: 1px solid #262626;
    border-bottom: 1px solid #242424;
    color: #b5b5b5;
    font: 10px/16px Roboto, sans-serif;
}

.grip-v {
    width: 4px;
    height: 20px;
    margin-top: 13px;
    background: repeating-linear-gradient(#222 0 1px, transparent 1px 3px);
}

.middle {
    align-self: center;
    margin-bottom: 6px;
}

.divided {
    margin-right: 6px;
    border-right: 1px solid #2a2a2a;
}

.pair {
    display: flex;
    flex-direction: column;
    gap: 6px;
}

.row {
    display: flex;
    align-items: center;
    gap: 5px;
    height: 20px;
}

.tight {
    gap: 4px;
}

.wide-gap {
    gap: 10px;
}

.effects {
    gap: 13px;
}

.at-end {
    justify-content: flex-end;
    gap: 9px;
    padding-right: 2px;
}

.dim {
    color: #777;
}

.tag {
    width: 9px;
    color: #d8d8d8;
    font-weight: bold;
}

.field {
    display: flex;
    align-items: center;
    width: 87px;
    height: 20px;
    padding: 0;
    border: 1px solid #4b4b4b;
    border-radius: 2px;
    background: #272727;
    color: #d8d8d8;
}

.field .steps {
    margin: 0 3px;
    color: #b0b0b0;
}

.field input,
.field select {
    flex: 1;
    width: 0;
    height: 18px;
    padding-left: 4px;
    border-left: 1px solid #4b4b4b;
}

.field .chev {
    margin: 0 4px;
}

.field .cap {
    width: 18px;
    height: 18px;
    margin: 0;
    padding: 4px;
    border-left: 1px solid #4b4b4b;
    color: #a8a8a8;
}

.off {
    border-color: #393939;
    background: #393939;
}

.off input {
    border: 0;
}

.off .steps,
.off .chev {
    color: #777;
}

.preview {
    background: #272727;
}

.stroke-line,
.corner-line {
    flex: 1;
    height: 18px;
    border: 4px solid #dedede;
    border-top-width: 5px;
    background: #000;
}

.corner-line {
    border: 2px solid #dedede;
    background: #dedede;
    box-shadow: inset -1px 2px #666;
}

.opacity {
    width: 71px;
    margin-left: 1px;
}

.opacity input {
    border: 0;
}

.boxed {
    width: 17px;
    height: 20px;
    border: 1px solid #4b4b4b;
    border-radius: 2px;
}

.pressed {
    width: 22px;
    height: 22px;
    border-radius: 2px;
    background: #202020;
    color: #c8c8c8;
}

.plain {
    width: 22px;
    height: 20px;
}

.tight .plain {
    margin-right: 4px;
}

.corner {
    align-items: flex-start;
}

.corner .row {
    gap: 3px;
}

.corner .preview {
    margin-left: 19px;
}

.object-style {
    gap: 12px;
}

.object-style .field {
    width: 181px;
}

.object-style select {
    border: 0;
    background: #dedede;
    color: #222;
}

/* Workspace */
.workspace {
    display: flex;
    flex: 1;
    min-height: 0;
    background: #262626;
}

.panel-head {
    display: flex;
    align-items: center;
    height: 12px;
    padding: 0 5px;
    border-bottom: 1px solid #242424;
    background: #2a2a2a;
    color: #aaa;
}

.end {
    justify-content: flex-end;
}

.tools {
    display: flex;
    flex-direction: column;
    flex: none;
    width: 74px;
    border-right: 2px solid #232323;
    background: #323232;
    color: #b5b5b5;
}

.grip {
    align-self: center;
    width: 18px;
    height: 4px;
    margin: 3px 0 7px;
    background: repeating-linear-gradient(90deg, #222 0 1px, transparent 1px 3px);
}

.tool-group {
    display: grid;
    grid-template-columns: 30px 30px;
    margin: 0 0 3px 6px;
}

.tool {
    position: relative;
    height: 22px;
    margin: 1px;
    border-radius: 2px;
}

.tool svg {
    width: 20px;
    height: 20px;
}

.active {
    background: #202020;
}

.more::after {
    content: '';
    position: absolute;
    right: 1px;
    bottom: 0;
    border: 2px solid;
    border-color: transparent #ddd #ddd transparent;
}

.color-proxy {
    margin: 1px 0 5px 6px;
}

.formatting,
.apply {
    display: flex;
    align-items: center;
    gap: 5px;
    height: 22px;
    margin-left: 15px;
}

.apply {
    gap: 2px;
    margin: 2px 0 4px 7px;
}

.mini {
    width: 18px;
    height: 18px;
    border-radius: 2px;
}

.mini svg {
    width: 16px;
    height: 16px;
}

.serif {
    font: bold 14px/16px 'Liberation Serif', serif;
}

/* Document window */
.document {
    display: flex;
    flex: 1;
    flex-direction: column;
    min-width: 0;
}

.tabs {
    display: flex;
    height: 28px;
}

.tab {
    display: flex;
    align-items: center;
    gap: 8px;
    padding: 2px 16px 0 14px;
    background: #323232;
    color: #d6d6d6;
    font-family: 'Open Sans', sans-serif;
    font-weight: 600;
}

.view {
    display: grid;
    grid-template: 17px 1fr / 16px 1fr 17px;
    flex: 1;
    min-height: 0;
}

.ruler-corner,
.ruler-h {
    width: 100%;
    height: 17px;
    border-bottom: 1px solid #777;
    background: #1f1f1f;
}

.ruler-h text,
.ruler-v text {
    fill: #e0e0e0;
    font: 10px Roboto, sans-serif;
}

.ruler-h path,
.ruler-v path {
    fill: none;
    stroke: #858585;
}

.ruler-v {
    display: flex;
    flex-direction: column;
    gap: 91px;
    min-height: 0;
    padding-top: 36px;
    overflow: hidden;
    border-right: 1px solid #666;
    background: #323232;
}

.ruler-strip {
    flex: none;
    width: 15px;
    height: 792px;
    background: #1f1f1f;
}

.ruler-strip text {
    fill: #a0a0a0;
}

.next {
    height: 8px;
}

.canvas {
    position: relative;
    overflow: hidden;
    background: #383838;
}

.pasteboard {
    height: 792px;
    margin: 36px 0 91px;
    background: #fff;
}

.following {
    height: 8px;
    margin: 0;
}

/* Page geometry on the pasteboard, 3 mm = 21px */
.spread {
    position: absolute;
    left: 207px;
    top: 237px;
    display: flex;
    width: 1206px;
    height: 390px;
    border: 1px solid #111;
    box-shadow: 2px 2px #000;
}

.page {
    flex: 1;
    padding: 20px;
}

.page + .page {
    border-left: 1px solid #111;
}

.margins {
    height: 100%;
    border: 1px solid #7b4bab;
    border-top-color: #b45fc4;
    border-bottom-color: #b45fc4;
}

.bleed {
    position: absolute;
    left: 186px;
    top: 215px;
    width: 1248px;
    height: 434px;
    border: 1px solid #bd6f83;
}

.scroll-up,
.scroll-v {
    display: flex;
    flex-direction: column;
    align-items: center;
    justify-content: center;
    border-right: 2px solid #232323;
    background: #2a2a2a;
    color: #707070;
}

.scroll-v {
    justify-content: space-between;
    padding-bottom: 3px;
}

.scroll-v .thumb {
    width: 14px;
    height: 52%;
    border-radius: 7px;
    background: #474747;
}

.statusbar {
    display: flex;
    align-items: center;
    height: 16px;
    padding-left: 11px;
    background: #323232;
    color: #b5b5b5;
    font: 10px/14px Roboto, sans-serif;
}

.statusbar button {
    width: 20px;
}

.statusbar > button:first-child {
    width: 10px;
    margin-right: 5px;
}

.page-number {
    display: flex;
    width: 91px;
    margin: 0 4px 0 5px;
    border: 1px solid #4b4b4b;
    background: #272727;
    color: #ddd;
}

.page-number input {
    flex: 1;
    width: 0;
    padding-left: 4px;
}

.page-number .cap {
    width: 18px;
    height: 14px;
    padding: 2px 4px;
    border-left: 1px solid #4b4b4b;
}

.open-doc {
    margin: 0 13px;
}

.profile {
    font-size: 11px;
}

.profile select {
    width: 101px;
}

.errors {
    gap: 6px;
    margin: 0 6px 0 15px;
    color: #e0e0e0;
}

.errors select {
    width: 66px;
    font-weight: 500;
}

.dot {
    width: 10px;
    height: 10px;
    border-radius: 50%;
    background: #4aa845;
}

.scroll-h {
    display: flex;
    align-items: center;
    justify-content: space-between;
    flex: 1;
    height: 16px;
    padding: 0 8px 0 4px;
    background: #2a2a2a;
    color: #707070;
}

.scroll-h .thumb {
    width: 65%;
    height: 14px;
    border-radius: 7px;
    background: #474747;
}

.left {
    transform: scaleX(-1);
}

.resize {
    width: 17px;
    height: 12px;
    border-right: 2px solid #323232;
    background: repeating-linear-gradient(135deg, #323232 0 2px, #444 2px 3px);
}

/* Panel dock */
.dock {
    flex: none;
    width: 183px;
    border-left: 1px solid #232323;
    background: #323232;
    color: #d6d6d6;
    font-family: 'Open Sans', sans-serif;
    font-weight: 600;
}

.panel-group {
    display: flex;
    flex-direction: column;
    padding: 10px 0 2px;
    border-bottom: 1px solid #242424;
    background: repeating-linear-gradient(90deg, #222 0 1px, transparent 1px 3px) 80px 3px / 20px 4px no-repeat;
}

.panel-group a {
    display: flex;
    align-items: center;
    gap: 7px;
    height: 28px;
    padding-left: 9px;
}

.panel-group svg {
    width: 20px;
    height: 20px;
    color: #b5b5b5;
}

.panel-group .fx {
    padding-left: 3px;
}

/* Dialog */
.dialog {
    position: absolute;
    left: 674px;
    top: 396px;
    width: 571px;
    height: 280px;
    border: 1px solid #2f837b;
    background: #323232;
    box-shadow: 2px 4px 14px rgba(0, 0, 0, 0.3);
    color: #e2e2e2;
    font-size: 12px;
}

.dialog h1 {
    margin: 0;
    padding: 0 9px;
    background: #fff;
    color: #1a1a1a;
    font-size: 14px;
    font-weight: normal;
    line-height: 37px;
}

.dialog-body {
    display: flex;
    justify-content: space-between;
    padding: 15px 15px 0 16px;
}

.settings {
    width: 428px;
    padding-top: 3px;
}

fieldset {
    display: grid;
    gap: 5px 8px;
    align-items: center;
    margin: 0;
    padding: 7px 0 14px;
    border: 1px solid #2b2b2b;
}

legend {
    margin-left: 7px;
    padding: 0 6px;
}

fieldset label {
    text-align: right;
}

.margin-fields {
    grid-template-columns: 75px 92px 12px 48px 92px;
    margin-bottom: 19px;
    padding-bottom: 23px;
}

.column-fields {
    grid-template-columns: 75px 92px 130px 92px;
}

.chain {
    grid-row: 1 / 3;
    grid-column: 3;
    color: #a0a0a0;
}

.dialog .field {
    width: 92px;
    height: 21px;
}

.dialog .field input:focus {
    border: 1px solid #4a9df0;
    background: #fff;
    height: 21px;
    padding-left: 3px;
    color: #222;
}

.dialog input::selection {
    background: #3f97f0;
    color: #d6e8ff;
}

.check {
    display: flex;
    align-items: center;
    gap: 7px;
    color: #b8b8b8;
}

.settings .check {
    margin-top: 12px;
}

.check input {
    width: 12px;
    height: 12px;
    border: 1px solid #999;
    border-radius: 2px;
}

.check input:checked {
    border: 0;
    background: #a0a0a0;
}

.check input:checked::after {
    content: '';
    display: block;
    width: 4px;
    height: 7px;
    margin: 1px 4px;
    border: solid #222;
    border-width: 0 2px 2px 0;
    transform: rotate(40deg);
}

.actions {
    display: flex;
    flex-direction: column;
    gap: 10px;
    width: 95px;
}

.actions button {
    height: 26px;
    border: 1px solid #b5b5b5;
    border-radius: 13px;
    color: #b8b8b8;
}

.actions .default {
    border-width: 2px;
    border-color: #d0d0d0;
}

.actions .check {
    margin-top: 2px;
}

.pointer {
    position: absolute;
    left: 56px;
    top: 99px;
}
```
FILE: script.js
```javascript
// 1 mm at 150 % zoom, in pixels
const MM = 180 / 25.4;

function addLabel(svg, x, y, text) {
    const label = document.createElementNS('http://www.w3.org/2000/svg', 'text');
    label.setAttribute('x', x);
    label.setAttribute('y', y);
    label.textContent = text;
    svg.appendChild(label);
}

// Ticks every half millimetre, a number every five
function drawRuler(svg, origin, vertical) {
    const size = vertical ? svg.clientHeight : svg.clientWidth;
    let d = '';
    for (let half = -60; ; half++) {
        const pos = Math.round(origin + half * MM / 2) + 0.5;
        if (pos > size) {
            break;
        }
        const major = half % 10 === 0;
        const length = major ? 16 : half % 2 === 0 ? 5 : 3;
        d += vertical ? `M16 ${pos}h${-length}` : `M${pos} 16v${-length}`;
        if (major) {
            const text = String(Math.abs(half / 2));
            if (vertical) {
                [...text].forEach((digit, i) => {
                    const y = pos + 10 + i * 9;
                    if (y > 4) {
                        addLabel(svg, 2, y, digit);
                    }
                });
            } else {
                addLabel(svg, pos + 1, 11, text);
            }
        }
    }
    const path = document.createElementNS('http://www.w3.org/2000/svg', 'path');
    path.setAttribute('d', d);
    svg.appendChild(path);
}

drawRuler(document.getElementById('ruler-h'), 208, false);
drawRuler(document.getElementById('ruler-v'), 201, true);
drawRuler(document.getElementById('ruler-v-next'), 201, true);

const bottomField = document.getElementById('m-bottom');
bottomField.focus();
bottomField.select();
```
